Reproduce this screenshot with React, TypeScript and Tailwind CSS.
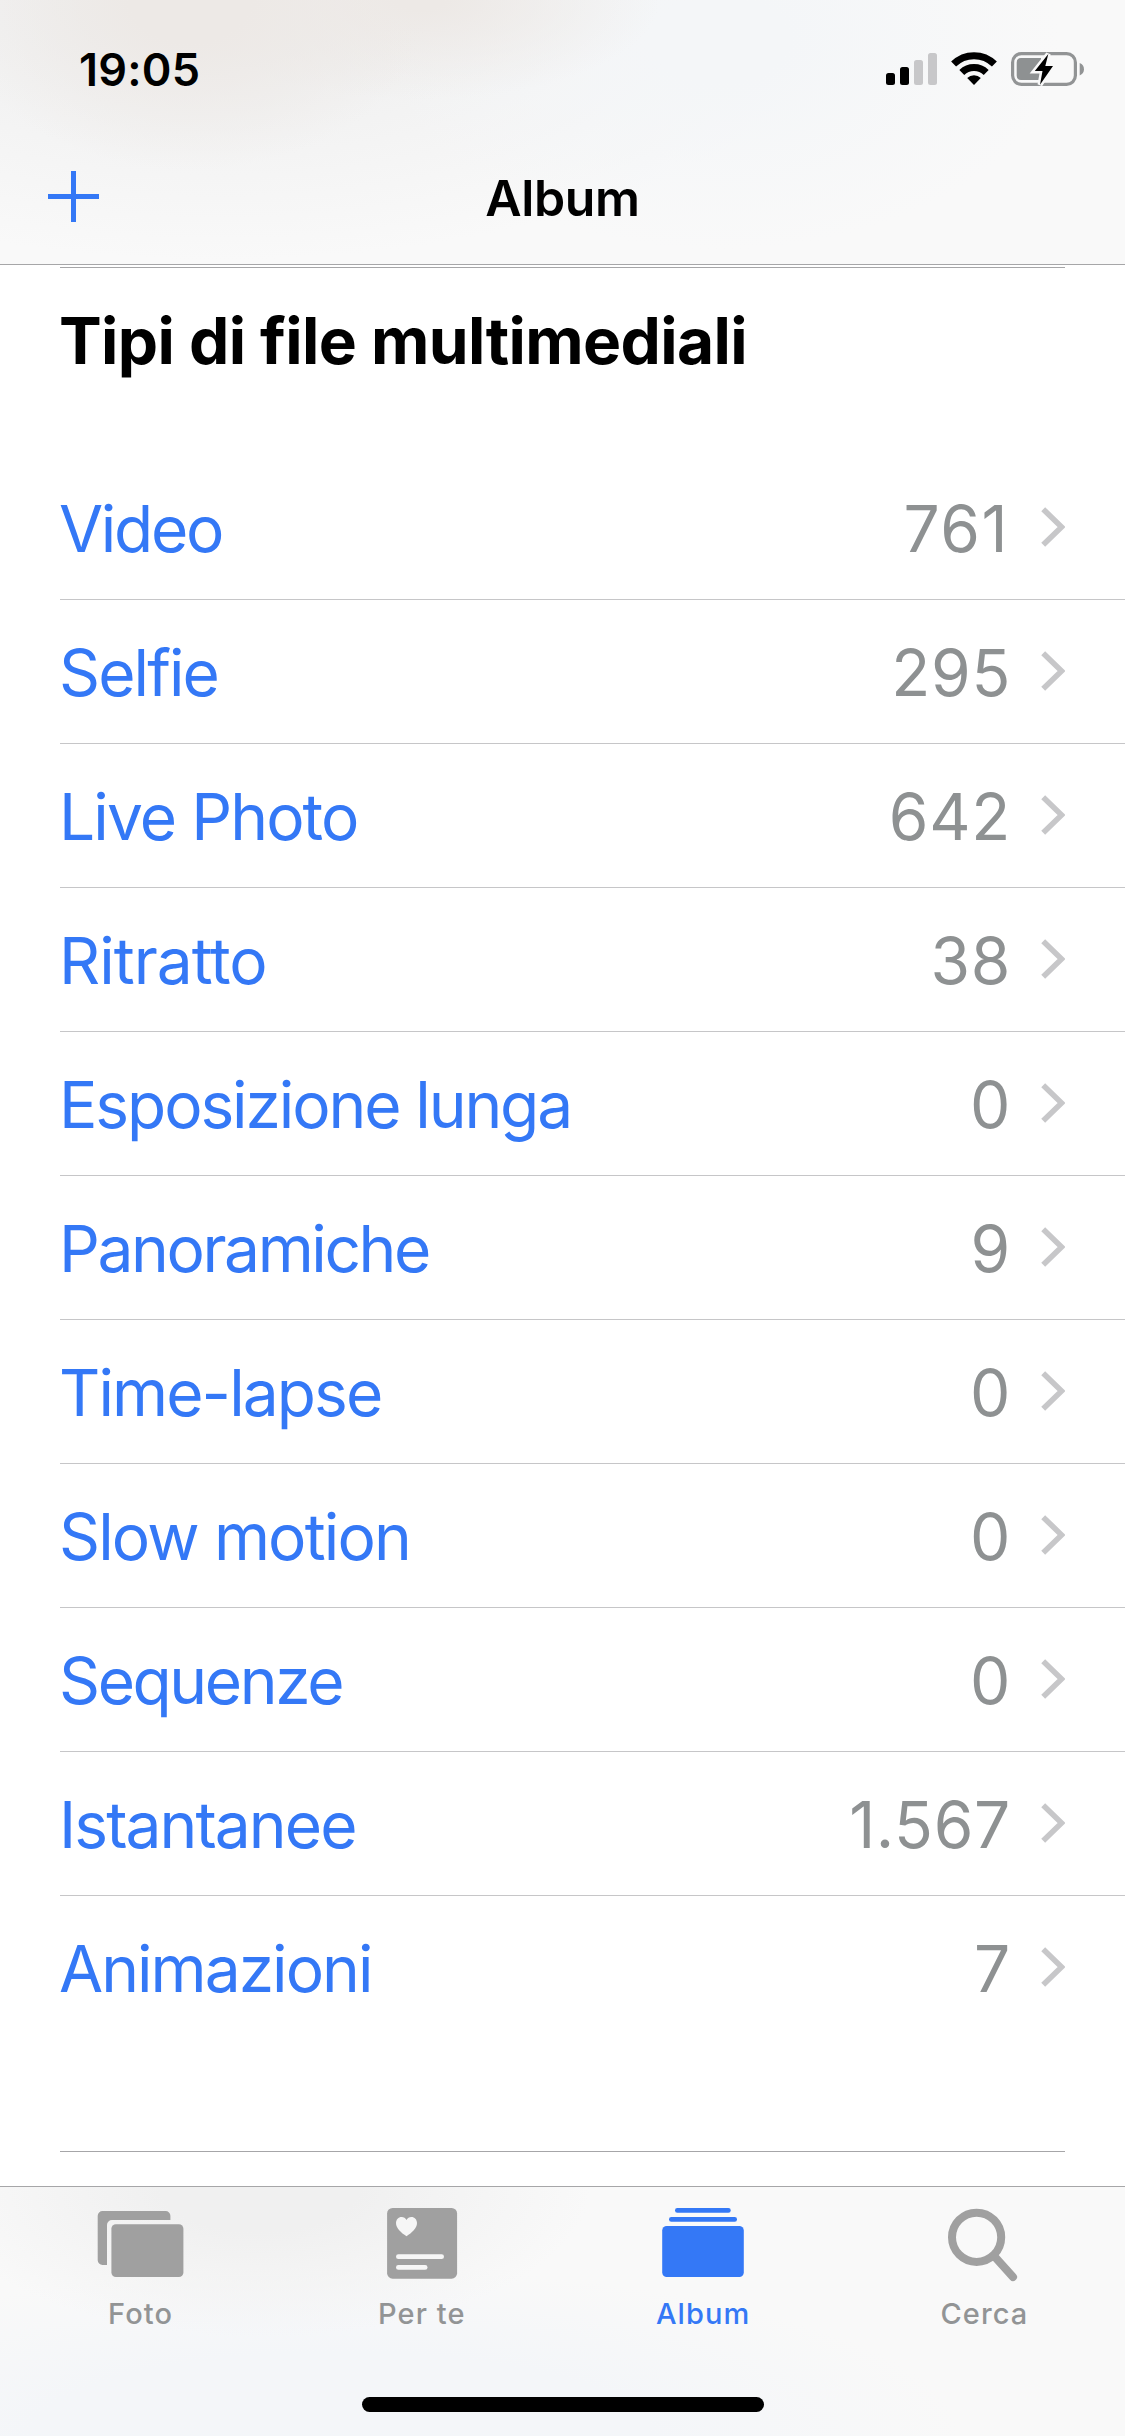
import { useState } from 'react'
import type { ReactNode } from 'react'
import clsx from 'clsx'

type MediaType = {
  label: string
  count: string
  tracking: string
}

const mediaTypes: MediaType[] = [
  { label: 'Video', count: '761', tracking: 'tracking-[-2.3px]' },
  { label: 'Selfie', count: '295', tracking: 'tracking-[-1.9px]' },
  { label: 'Live Photo', count: '642', tracking: 'tracking-[-1.9px]' },
  { label: 'Ritratto', count: '38', tracking: 'tracking-[-1px]' },
  { label: 'Esposizione lunga', count: '0', tracking: 'tracking-[-2.1px]' },
  { label: 'Panoramiche', count: '9', tracking: 'tracking-[-2.4px]' },
  { label: 'Time-lapse', count: '0', tracking: 'tracking-[-1.9px]' },
  { label: 'Slow motion', count: '0', tracking: 'tracking-[-1.85px]' },
  { label: 'Sequenze', count: '0', tracking: 'tracking-[-2.4px]' },
  { label: 'Istantanee', count: '1.567', tracking: 'tracking-[-1.9px]' },
  { label: 'Animazioni', count: '7', tracking: 'tracking-[-1.95px]' },
]

function SignalIcon() {
  return (
    <svg width="51" height="34" viewBox="0 0 51 34" aria-hidden>
      <rect x="0" y="21" width="9" height="12" rx="2.5" fill="#000" />
      <rect x="14" y="15" width="9" height="18" rx="2.5" fill="#000" />
      <rect x="28" y="8" width="9" height="25" rx="2.5" fill="#c7c7c9" />
      <rect x="42" y="1" width="9" height="32" rx="2.5" fill="#c7c7c9" />
    </svg>
  )
}

function WifiIcon() {
  return (
    <svg width="46" height="34" viewBox="0 0 46 34" aria-hidden>
      <g fill="none" stroke="#000" strokeWidth="7">
        <path d="M2.6 12.1 A29 29 0 0 1 43.4 12.1" />
        <path d="M10.8 20.4 A17.4 17.4 0 0 1 35.2 20.4" />
      </g>
      <path d="M23 32.9 L16.2 26 A9.8 9.8 0 0 1 29.8 26 Z" fill="#000" />
    </svg>
  )
}

function BatteryIcon() {
  return (
    <svg width="73" height="34" viewBox="0 0 73 34" aria-hidden>
      <rect x="1.6" y="1.6" width="62.8" height="30.8" rx="8.8" fill="none" stroke="#929495" strokeWidth="3.2" />
      <path d="M10 6H30V28H10A4.5 4.5 0 0 1 5.7 23.5V10.5A4.5 4.5 0 0 1 10 6Z" fill="#8e9192" />
      <path d="M68.7 11C71.6 12.2 73 14.4 73 17.2S71.6 22.2 68.7 23.4Z" fill="#929495" />
      <path
        d="M37.3 2L23.8 19H31.5L29 32.7L42 14H34.3Z"
        fill="#000"
        stroke="#f9f9f9"
        strokeWidth="5"
        paintOrder="stroke"
      />
    </svg>
  )
}

function StatusBar() {
  return (
    <div className="flex h-[132px] items-center justify-between pt-[6px] pr-[41px] pl-[79px]">
      <span className="text-[45px] leading-[45px] font-semibold tracking-[0.2px]">19:05</span>
      <div className="flex items-center gap-[14px]">
        <SignalIcon />
        <WifiIcon />
        <BatteryIcon />
      </div>
    </div>
  )
}

function Header() {
  return (
    <header className="h-[265px] border-b border-[#a6a6a8] bg-[#f9f9f9] bg-[radial-gradient(ellipse_240px_170px_at_190px_0px,#ede9e6_25%,transparent),radial-gradient(ellipse_240px_100px_at_420px_0px,#ede9e6_10%,transparent),radial-gradient(ellipse_340px_210px_at_720px_40px,#f4f6f8_20%,transparent),radial-gradient(ellipse_620px_260px_at_220px_0px,#efefef_20%,transparent)]">
      <StatusBar />
      <div className="grid h-[132px] grid-cols-3 items-center px-[48px]">
        <button type="button" aria-label="Nuovo album" className="-mt-[3px] w-[51px]">
          <svg width="51" height="51" viewBox="0 0 51 51" className="block" aria-hidden>
            <path d="M0 25.5H51M25.5 0V51" stroke="#3478f6" strokeWidth="5" />
          </svg>
        </button>
        <h1 className="text-center text-[50px] leading-[50px] font-semibold tracking-[-0.4px]">Album</h1>
      </div>
    </header>
  )
}

function MediaRow({ item, last }: { item: MediaType; last: boolean }) {
  return (
    <li
      className={clsx(
        'ml-[60px] flex h-[144px] items-center border-b pr-[60px]',
        last ? 'border-transparent' : 'border-[#c6c6c8]',
      )}
    >
      <span className={clsx('-ml-px flex-1 pt-[3px] text-[64px] leading-[64px] text-[#3478f6]', item.tracking)}>
        {item.label}
      </span>
      <span
        className={clsx(
          'pt-[3px] text-[64px] leading-[64px] text-[#8e9192]',
          item.count.endsWith('1') ? 'mr-[2px] tracking-[1.5px]' : 'tracking-[0.7px]',
        )}
      >
        {item.count}
      </span>
      <svg width="24" height="40" viewBox="0 0 24 40" className="-mt-px ml-[30px]" aria-hidden>
        <path d="M2.2 2.2L20.6 20L2.2 37.8" fill="none" stroke="#c7c7c9" strokeWidth="5.6" />
      </svg>
    </li>
  )
}

function FotoIcon() {
  return (
    <>
      <path d="M9.5 3H72.6A4.8 4.8 0 0 1 77.4 7.8V12H19A5 5 0 0 0 14 17V57H9.5A4.8 4.8 0 0 1 4.7 52.2V7.8A4.8 4.8 0 0 1 9.5 3Z" />
      <rect x="18.4" y="16.3" width="72" height="52.7" rx="4.5" />
    </>
  )
}

function PerTeIcon() {
  return (
    <>
      <rect x="13.1" y="0" width="70" height="70.7" rx="5.5" />
      <g fill="#f6f6f6">
        <path d="M32.5 28.2C27 24.6 22 20.4 22 15C22 11.4 24.5 8.9 27.6 8.9C29.8 8.9 31.5 10 32.5 11.9C33.5 10 35.2 8.9 37.4 8.9C40.5 8.9 43 11.4 43 15C43 20.4 38 24.6 32.5 28.2Z" />
        <rect x="22" y="46.3" width="48" height="4.8" rx="2.4" />
        <rect x="22" y="57" width="31.5" height="4.8" rx="2.4" />
      </g>
    </>
  )
}

function AlbumIcon() {
  return (
    <>
      <rect x="20" y="0" width="55.7" height="4.7" rx="2.3" />
      <rect x="14" y="9" width="68" height="4.7" rx="2.3" />
      <rect x="7.2" y="18" width="81.6" height="51" rx="4.5" />
    </>
  )
}

function CercaIcon() {
  return (
    <g fill="none" stroke="currentColor" strokeWidth="8" strokeLinecap="round">
      <circle cx="40.6" cy="29.3" r="24.6" />
      <path d="M59 49L77 69" />
    </g>
  )
}

const tabs: { label: string; icon: ReactNode }[] = [
  { label: 'Foto', icon: <FotoIcon /> },
  { label: 'Per te', icon: <PerTeIcon /> },
  { label: 'Album', icon: <AlbumIcon /> },
  { label: 'Cerca', icon: <CercaIcon /> },
]

function TabBar() {
  const [active, setActive] = useState('Album')

  return (
    <nav className="flex h-[250px] flex-col items-center border-t border-[#a6a6a8] bg-[#f9f9f9] bg-[radial-gradient(ellipse_330px_150px_at_260px_0px,#f0f0f0_30%,transparent),radial-gradient(ellipse_620px_170px_at_340px_250px,#f4f6f9_50%,transparent)]">
      <div className="grid w-full grid-cols-4">
        {tabs.map(({ label, icon }) => (
          <button
            key={label}
            type="button"
            onClick={() => setActive(label)}
            className={clsx(
              'flex flex-col items-center gap-[17px] pt-[21px]',
              active === label ? 'text-[#3478f6]' : 'text-[#a0a0a0]',
            )}
          >
            <svg width="96" height="74" viewBox="0 0 96 74" fill="currentColor" aria-hidden>
              {icon}
            </svg>
            <span
              className={clsx(
                'text-[29px] leading-[29px] font-medium tracking-[1.1px]',
                active !== label && 'text-[#929495]',
              )}
            >
              {label}
            </span>
          </button>
        ))}
      </div>
      <div className="mt-auto mb-[24px] h-[15px] w-[402px] rounded-full bg-black" />
    </nav>
  )
}

export default function App() {
  return (
    <div className="flex h-[2436px] w-[1125px] flex-col bg-white font-['Inter',sans-serif] text-black">
      <Header />
      <main className="flex-1 pt-[2px]">
        <section>
          <div className="mx-[60px] h-px bg-[#a6a6a8]" />
          <h2 className="mt-[41px] ml-[59px] text-[64px] leading-[64px] font-bold tracking-[-0.6px]">
            Tipi di file multimediali
          </h2>
          <ul className="mt-[83px]">
            {mediaTypes.map((item, i) => (
              <MediaRow key={item.label} item={item} last={i === mediaTypes.length - 1} />
            ))}
          </ul>
          <div className="mx-[60px] mt-[111px] h-px bg-[#a6a6a8]" />
        </section>
      </main>
      <TabBar />
    </div>
  )
}
